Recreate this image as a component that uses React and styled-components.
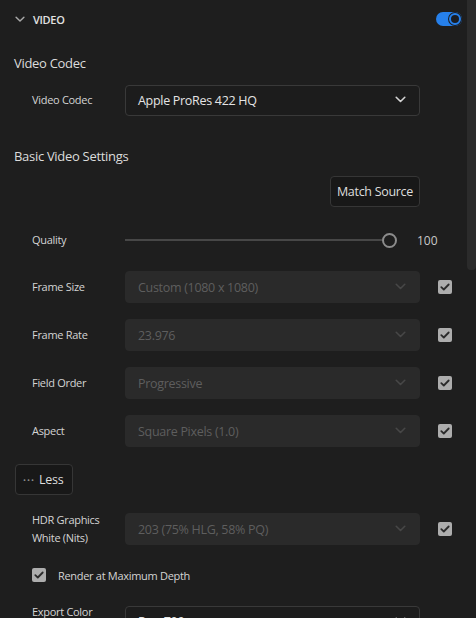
import React from 'react';
import styled, { createGlobalStyle } from 'styled-components';

const GlobalStyle = createGlobalStyle`
  html, body {
    margin: 0;
    padding: 0;
    background: #1e1e1e;
  }
  * {
    box-sizing: border-box;
  }
`;

function Chevron({ color = '#cfcfcf', size = 11 }) {
  return (
    <svg width={size} height={size * 0.65} viewBox="0 0 11 7" fill="none">
      <path
        d="M1.2 1.2 L5.5 5.4 L9.8 1.2"
        stroke={color}
        strokeWidth="1.6"
        strokeLinecap="round"
        strokeLinejoin="round"
      />
    </svg>
  );
}

function Check() {
  return (
    <svg width="10" height="8" viewBox="0 0 10 8" fill="none">
      <path
        d="M1.3 4.2 L3.8 6.5 L8.7 1.5"
        stroke="#2b2b2b"
        strokeWidth="1.8"
        strokeLinecap="round"
        strokeLinejoin="round"
      />
    </svg>
  );
}

function Select({ value, disabled }) {
  return (
    <SelectBox disabled={disabled}>
      <SelectText disabled={disabled}>{value}</SelectText>
      <Chevron color={disabled ? '#474747' : '#d4d4d4'} />
    </SelectBox>
  );
}

function SettingRow({ label, value, disabled, checked }) {
  return (
    <Row>
      <Label>{label}</Label>
      <Select value={value} disabled={disabled} />
      {checked ? (
        <CheckBox>
          <Check />
        </CheckBox>
      ) : (
        <CheckSpacer />
      )}
    </Row>
  );
}

export default function App() {
  return (
    <>
      <GlobalStyle />
      <Page>
        <Content>
          <Header>
            <HeaderTitle>
              <Chevron color="#a8a8a8" size={10} />
              <span>VIDEO</span>
            </HeaderTitle>
            <Toggle>
              <Knob />
            </Toggle>
          </Header>

          <SectionTitle top={15}>Video Codec</SectionTitle>
          <Block top={11}>
            <SettingRow label="Video Codec" value="Apple ProRes 422 HQ" />
          </Block>

          <SectionTitle top={30}>Basic Video Settings</SectionTitle>
          <ButtonRow>
            <OutlineButton>Match Source</OutlineButton>
          </ButtonRow>

          <Block top={17}>
            <Row>
              <Label>Quality</Label>
              <Slider>
                <Track />
                <Thumb />
              </Slider>
              <SliderValue>100</SliderValue>
            </Row>
          </Block>

          <Stack top={15}>
            <SettingRow label="Frame Size" value="Custom (1080 x 1080)" disabled checked />
            <SettingRow label="Frame Rate" value="23.976" disabled checked />
            <SettingRow label="Field Order" value="Progressive" disabled checked />
            <SettingRow label="Aspect" value="Square Pixels (1.0)" disabled checked />
          </Stack>

          <LessButton>
            <Dots>•••</Dots>
            <span>Less</span>
          </LessButton>

          <Block top={16}>
            <SettingRow
              label={
                <>
                  HDR Graphics
                  <br />
                  White (Nits)
                </>
              }
              value="203 (75% HLG, 58% PQ)"
              disabled
              checked
            />
          </Block>

          <CheckRow>
            <CheckBox>
              <Check />
            </CheckBox>
            <span>Render at Maximum Depth</span>
          </CheckRow>

          <Block top={12}>
            <SettingRow
              label={
                <>
                  Export Color
                  <br />
                  Space
                </>
              }
              value="Rec. 709"
            />
          </Block>
        </Content>
        <ScrollTrack>
          <ScrollThumb />
        </ScrollTrack>
      </Page>
    </>
  );
}

const Page = styled.div`
  display: flex;
  align-items: flex-start;
  width: 476px;
  height: 618px;
  overflow: hidden;
  background: #1e1e1e;
  font-family: 'Open Sans', 'Liberation Sans', sans-serif;
  color: #d2d2d2;
`;

const Content = styled.div`
  flex: 1;
  display: flex;
  flex-direction: column;
  padding-left: 14px;

  & > * {
    flex-shrink: 0;
  }
`;

const ScrollTrack = styled.div`
  width: 10px;
  padding-left: 1px;
`;

const ScrollThumb = styled.div`
  width: 9px;
  height: 270px;
  background: #2b2b2b;
  border-radius: 0 0 4px 4px;
`;

const Header = styled.div`
  height: 38px;
  display: flex;
  align-items: center;
  justify-content: space-between;
  padding-left: 1px;
  padding-right: 4px;
`;

const HeaderTitle = styled.div`
  display: flex;
  align-items: center;
  gap: 8px;
  font-size: 11px;
  font-weight: 600;
  color: #e2e2e2;
  letter-spacing: -0.3px;
`;

const Toggle = styled.div`
  width: 26px;
  height: 14px;
  border-radius: 7px;
  background: #2680eb;
  display: flex;
  align-items: center;
  justify-content: flex-end;
  padding-right: 1px;
`;

const Knob = styled.div`
  width: 12px;
  height: 12px;
  border-radius: 50%;
  background: #1b1d22;
  border: 2px solid #2680eb;
  box-shadow: 0 0 0 1px #1b1d22;
`;

const SectionTitle = styled.div`
  margin-top: ${(p) => p.top}px;
  height: 20px;
  line-height: 20px;
  font-size: 13px;
  color: #dcdcdc;
  letter-spacing: -0.3px;
`;

const Block = styled.div`
  margin-top: ${(p) => p.top}px;
`;

const Stack = styled.div`
  margin-top: ${(p) => p.top}px;
  display: flex;
  flex-direction: column;
  gap: 16px;
`;

const Row = styled.div`
  display: flex;
  align-items: center;
  min-height: 32px;
  padding-left: 18px;
`;

const Label = styled.div`
  width: 93px;
  font-size: 11px;
  line-height: 18px;
  color: #d4d4d4;
  letter-spacing: -0.3px;
`;

const SelectBox = styled.div`
  width: 295px;
  height: ${(p) => (p.disabled ? 32 : 31)}px;
  display: flex;
  align-items: center;
  justify-content: space-between;
  padding: 0 13px 0 12px;
  border-radius: 4px;
  background: ${(p) => (p.disabled ? '#2a2a2a' : '#1c1c1c')};
  border: 1px solid ${(p) => (p.disabled ? '#2a2a2a' : '#393939')};
`;

const SelectText = styled.span`
  font-size: 12.5px;
  letter-spacing: -0.3px;
  color: ${(p) => (p.disabled ? '#5e5e5e' : '#e4e4e4')};
`;

const CheckSpacer = styled.div`
  width: 14px;
  margin-left: 18px;
`;

const CheckBox = styled.div`
  width: 14px;
  height: 14px;
  margin-left: 18px;
  border-radius: 2px;
  background: #adadad;
  display: flex;
  align-items: center;
  justify-content: center;
  flex-shrink: 0;
`;

const ButtonRow = styled.div`
  margin-top: 10px;
  display: flex;
  justify-content: flex-end;
  padding-right: 46px;
`;

const OutlineButton = styled.div`
  height: 31px;
  padding: 0 6px;
  display: flex;
  align-items: center;
  border-radius: 4px;
  border: 1px solid #363636;
  background: #181818;
  font-size: 12.5px;
  letter-spacing: -0.3px;
  color: #dedede;
`;

const Slider = styled.div`
  width: 272px;
  height: 16px;
  display: flex;
  align-items: center;
`;

const Track = styled.div`
  flex: 1;
  height: 2px;
  background: #474747;
`;

const Thumb = styled.div`
  width: 15px;
  height: 15px;
  border-radius: 50%;
  border: 2px solid #8c8c8c;
`;

const SliderValue = styled.div`
  margin-left: 20px;
  font-size: 12px;
  color: #c8c8c8;
`;

const LessButton = styled.div`
  margin-top: 17px;
  margin-left: 1px;
  width: 58px;
  height: 31px;
  display: flex;
  align-items: center;
  gap: 4px;
  padding-left: 7px;
  border-radius: 4px;
  border: 1px solid #363636;
  background: #181818;
  font-size: 12.5px;
  letter-spacing: -0.3px;
  color: #dedede;
`;

const Dots = styled.span`
  font-size: 8px;
  letter-spacing: 1px;
  color: #8a8a8a;
`;

const CheckRow = styled.div`
  margin-top: 12px;
  height: 32px;
  display: flex;
  align-items: center;
  gap: 12px;
  font-size: 11px;
  letter-spacing: -0.3px;
  color: #d4d4d4;

  & > div {
    margin-left: 18px;
  }
`;
